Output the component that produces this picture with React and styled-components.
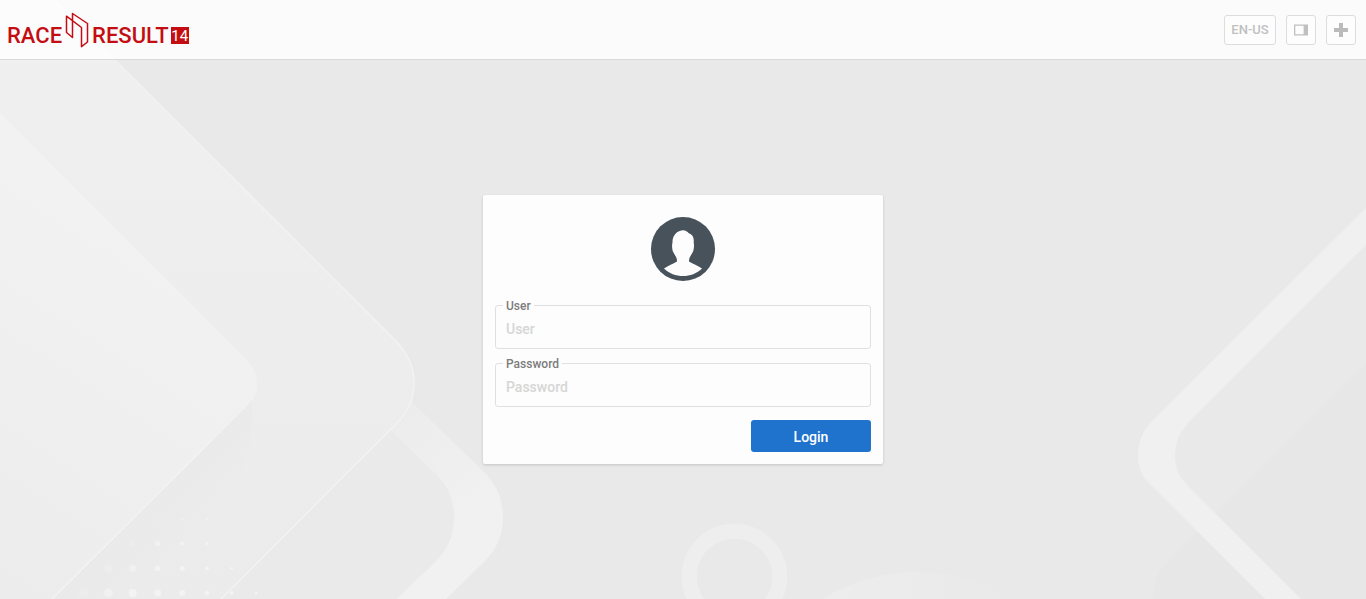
import React, { useState } from 'react';
import styled, { createGlobalStyle } from 'styled-components';

const GlobalStyle = createGlobalStyle`
  *, *::before, *::after {
    box-sizing: border-box;
  }

  body {
    margin: 0;
    background-color: #e9e9e9;
    font-family: Roboto, 'Liberation Sans', sans-serif;
    font-weight: 500;
  }
`;

const StyledPage = styled.div`
  position: relative;
  min-height: 100vh;
  display: flex;
  flex-direction: column;
`;

const StyledBackdrop = styled.svg`
  position: absolute;
  top: 0;
  left: 0;
  width: 100%;
  height: 100%;
  z-index: -1;
`;

const StyledHeader = styled.header`
  height: 60px;
  padding: 0 10px 0 7px;
  display: flex;
  align-items: center;
  justify-content: space-between;
  background-color: rgba(255, 255, 255, 0.8);
  border-bottom: 1px solid #dadada;
`;

const StyledLogo = styled.a`
  display: flex;
  align-items: center;
  color: #c40d12;
  font-size: 22px;
  text-decoration: none;

  svg {
    margin: 0 2px;
  }
`;

const StyledWord = styled.span`
  padding-top: 12px;
  line-height: 24px;
`;

const StyledVersion = styled.span`
  margin: 12px 0 0 2px;
  width: 18px;
  height: 17px;
  background-color: #c40d12;
  color: #fff;
  font-size: 15px;
  font-weight: 400;
  line-height: 18px;
  text-align: center;
`;

const StyledToolbar = styled.div`
  display: flex;
  gap: 10px;
`;

const StyledToolButton = styled.button`
  min-width: ${({ $text }) => ($text ? '52px' : '30px')};
  height: 30px;
  padding: 0;
  display: flex;
  align-items: center;
  justify-content: center;
  background-color: #fdfdfd;
  border: 1px solid #dddddd;
  border-radius: 3px;
  color: #c0c0c0;
  font: inherit;
  font-size: 13px;
  line-height: 16px;
  cursor: pointer;
`;

const StyledMain = styled.main`
  flex: 1;
  padding: 12px;
  display: flex;
  align-items: center;
  justify-content: center;
`;

const StyledCard = styled.form`
  width: 100%;
  max-width: 400px;
  padding: 22px 12px 12px;
  display: flex;
  flex-direction: column;
  background-color: #fdfdfd;
  border-radius: 2px;
  box-shadow: 0 1px 3px rgba(0, 0, 0, 0.16);
`;

const StyledAvatar = styled.svg`
  align-self: center;
  margin-bottom: 24px;
`;

const StyledFields = styled.div`
  display: grid;
  gap: 14px;
  margin-bottom: 13px;
`;

const StyledField = styled.div`
  position: relative;
`;

const StyledLabel = styled.label`
  position: absolute;
  top: -7px;
  left: 8px;
  padding: 0 3px;
  background-color: #fdfdfd;
  color: #7c7c7c;
  font-size: 12px;
  line-height: 16px;
`;

const StyledInput = styled.input`
  display: block;
  width: 100%;
  height: 44px;
  padding: 4px 10px 0;
  background-color: transparent;
  border: 1px solid #e0e0e0;
  border-radius: 3px;
  color: #555;
  font: inherit;
  font-size: 14px;
  outline: none;

  &::placeholder {
    color: #d6d6d6;
    opacity: 1;
  }

  &:focus {
    border-color: #1f73cd;
  }
`;

const StyledLoginButton = styled.button`
  align-self: flex-end;
  width: 120px;
  height: 32px;
  padding: 2px 0 0;
  background-color: #1f73cd;
  border: none;
  border-radius: 3px;
  color: #fff;
  font: inherit;
  font-size: 14px;
  cursor: pointer;
`;

// x, y, radius, opacity
const dots = [
  [157.7, 519, 1.6, 0.3], [182.3, 519, 1.3, 0.6], [207, 519, 1.1, 0.8],
  [132.7, 543.5, 2.8, 0.3], [157.7, 543.5, 2.6, 0.8], [182.3, 543.5, 2.1, 1], [207, 543.5, 1.5, 1], [231.7, 543.5, 0.8, 0.8],
  [108.3, 568.3, 4, 0.4], [132.7, 568.3, 3.4, 0.8], [157.7, 568.3, 2.8, 1], [182.3, 568.3, 2.5, 1], [207, 568.3, 2, 1], [231.7, 568.3, 1.3, 1], [256.3, 568.3, 0.7, 1],
  [83.3, 593, 4.8, 0.3], [108.3, 593, 4.4, 0.7], [132.7, 593, 4, 1], [157.7, 593, 3.5, 1], [182.3, 593, 3, 1], [207, 593, 2.4, 1], [231.7, 593, 1.9, 1], [256.3, 593, 1.4, 1],
];

const Backdrop = () => (
  <StyledBackdrop viewBox="0 0 1366 599" preserveAspectRatio="xMidYMid slice" aria-hidden="true">
    <defs>
      <linearGradient id="outer" gradientUnits="userSpaceOnUse" x1="0" y1="0" x2="0" y2="599">
        <stop offset="0" stopColor="#f0f0f0" />
        <stop offset="1" stopColor="#ebebeb" />
      </linearGradient>
      <linearGradient id="inner" gradientUnits="userSpaceOnUse" x1="150" y1="240" x2="-60" y2="560">
        <stop offset="0" stopColor="#f2f2f2" />
        <stop offset="1" stopColor="#ececec" />
      </linearGradient>
      <linearGradient id="edge" gradientUnits="userSpaceOnUse" x1="0" y1="340" x2="0" y2="450">
        <stop offset="0" stopColor="#f3f3f3" stopOpacity="0" />
        <stop offset="1" stopColor="#f3f3f3" />
      </linearGradient>
      <linearGradient id="shade" gradientUnits="userSpaceOnUse" x1="150" y1="500" x2="192" y2="542">
        <stop offset="0" stopColor="#eaeaea" />
        <stop offset="1" stopColor="#eaeaea" stopOpacity="0" />
      </linearGradient>
      <linearGradient id="band" gradientUnits="userSpaceOnUse" x1="400" y1="410" x2="480" y2="510">
        <stop offset="0" stopColor="#ececec" />
        <stop offset="1" stopColor="#f1f1f1" />
      </linearGradient>
      <linearGradient id="disc" gradientUnits="userSpaceOnUse" x1="820" y1="0" x2="1020" y2="0">
        <stop offset="0" stopColor="#ededed" />
        <stop offset="1" stopColor="#e9e9e9" />
      </linearGradient>
    </defs>
    <path d="M380 410L437 475Q454 494 454 517T437 560L397 599H220Z" fill="#eaeaea" />
    <path d="M380 371L486 474Q503 492 503 517T486 560L446 599H397L437 560Q454 542 454 517T437 475L370 410Z" fill="url(#band)" />
    <path d="M0 -55L55 0L395 340Q414 359 414 383T395 425L221 599H0Z" fill="url(#outer)" />
    <path d="M55 0L395 340Q414 359 414 383T395 425L221 599" fill="none" stroke="#f3f3f3" strokeWidth="1.3" />
    <path d="M252 400L247 405L52 599H150L240 475Q254 440 252 400Z" fill="url(#shade)" />
    <path d="M0 113L246 359Q257 370 257 383T247 405L52 599H0Z" fill="url(#inner)" />
    <path d="M257 383Q257 396 247 405L52 599" fill="none" stroke="url(#edge)" strokeWidth="1.4" />
    {dots.map(([x, y, r, opacity]) => (
      <circle key={`${x}-${y}`} cx={x} cy={y} r={r} fill="#f3f3f3" opacity={opacity} />
    ))}
    <circle cx="734.5" cy="576.5" r="45.3" fill="none" stroke="#eeeeee" strokeWidth="15" />
    <circle cx="917" cy="752" r="180" fill="url(#disc)" />
    <path d="M1366 363L1164 565Q1153 578 1153 599H1366Z" fill="#e7e7e7" />
    <path d="M1366 208L1152 421Q1138 436 1138 455T1151 485L1265 599H1301L1187 485Q1175 473 1175 455T1188 423L1366 245Z" fill="#f0f0f0" />
  </StyledBackdrop>
);

const Logo = () => (
  <StyledLogo href="#" aria-label="RACE RESULT 14">
    <StyledWord>RACE</StyledWord>
    <svg width="26" height="36" viewBox="0 0 26 36" fill="none" stroke="#c40d12" strokeWidth="1.5" strokeLinejoin="round">
      <path d="M2.500 4.200L17.500 15.500V34.700L23.500 30V11.500L8.500 1.500V25.500L2.500 20.500Z" />
    </svg>
    <StyledWord>RESULT</StyledWord>
    <StyledVersion>14</StyledVersion>
  </StyledLogo>
);

const Field = ({ id, label, type, value, onChange }) => (
  <StyledField>
    <StyledInput id={id} type={type} placeholder={label} value={value} onChange={onChange} />
    <StyledLabel htmlFor={id}>{label}</StyledLabel>
  </StyledField>
);

const App = () => {
  const [user, setUser] = useState('');
  const [password, setPassword] = useState('');

  return (
    <StyledPage>
      <GlobalStyle />
      <Backdrop />
      <StyledHeader>
        <Logo />
        <StyledToolbar>
          <StyledToolButton type="button" $text>EN-US</StyledToolButton>
          <StyledToolButton type="button" aria-label="Toggle panel">
            <svg width="14" height="12" viewBox="0 0 14 12">
              <path fill="currentColor" fillRule="evenodd" d="M0 0.500H14V11.500H0ZM1.300 1.800V10.200H9.600V1.800Z" />
            </svg>
          </StyledToolButton>
          <StyledToolButton type="button" aria-label="Add">
            <svg width="14" height="14" viewBox="0 0 14 14">
              <path fill="#bbbbbb" d="M5 0H9V5H14V9H9V14H5V9H0V5H5Z" />
            </svg>
          </StyledToolButton>
        </StyledToolbar>
      </StyledHeader>
      <StyledMain>
        <StyledCard onSubmit={(e) => e.preventDefault()}>
          <StyledAvatar width="64" height="64" viewBox="0 0 64 64" aria-hidden="true">
            <circle cx="32" cy="32" r="32" fill="#48525a" />
            <path
              fill="#fdfdfd"
              d="M31.500 13.200C34.500 13 36.500 14.500 37.500 16C41.500 17.500 43.300 20.500 42.700 25.500C43.300 28 43 31 42.300 34C41.500 36 40.500 37 39.500 39C38.500 40.500 38 42 38 44.500C42 47 46.500 48.500 51 51.500C46 56.500 39 59 32 59S18 56.500 13 51.500C17.500 48.500 22 47 26 44.500C26 42 25.500 40.500 24.500 39C23.500 37 22.500 36 21.700 34C21 31 20.800 28 21.500 25.500C21.200 19 25.500 13.800 31.500 13.200Z"
            />
          </StyledAvatar>
          <StyledFields>
            <Field id="user" label="User" type="text" value={user} onChange={(e) => setUser(e.target.value)} />
            <Field id="password" label="Password" type="password" value={password} onChange={(e) => setPassword(e.target.value)} />
          </StyledFields>
          <StyledLoginButton type="submit">Login</StyledLoginButton>
        </StyledCard>
      </StyledMain>
    </StyledPage>
  );
};

export default App;
